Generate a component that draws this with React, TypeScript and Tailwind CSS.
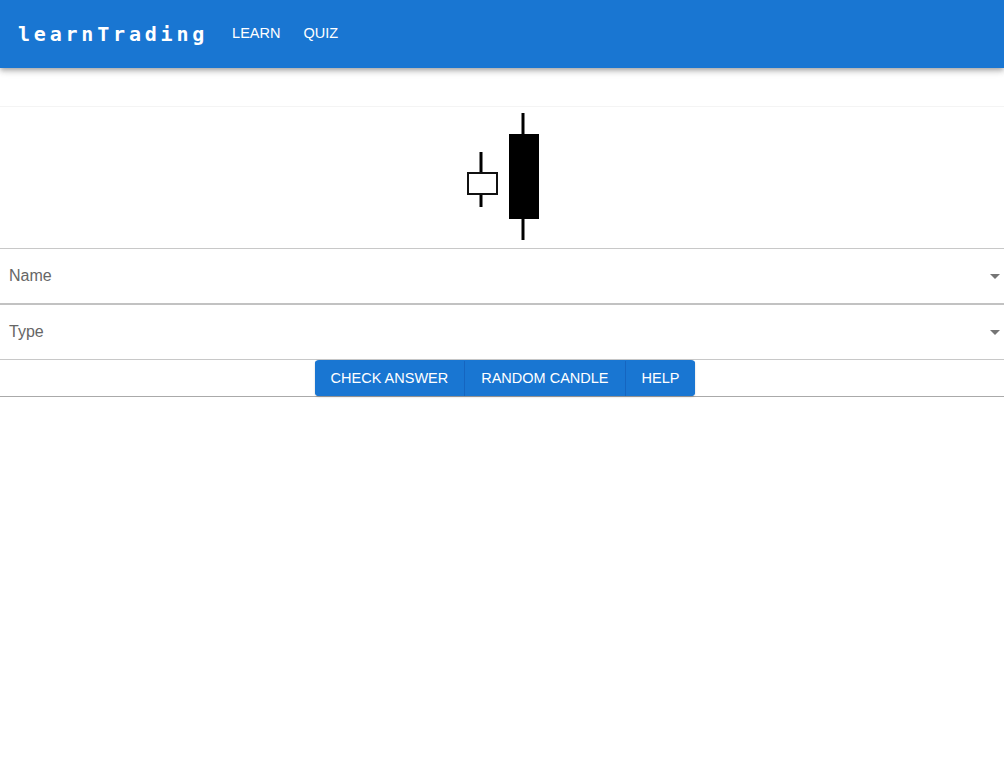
import { useState } from "react";

function CandleChart() {
  return (
    <svg width="78" height="141" viewBox="0 0 78 141">
      {/* small hollow candle */}
      <line x1="18" y1="45" x2="18" y2="100" stroke="#000" strokeWidth="3" />
      <rect x="5" y="66" width="29" height="21" fill="#fff" stroke="#111" strokeWidth="2" />
      {/* big filled candle */}
      <line x1="60" y1="6" x2="60" y2="133" stroke="#000" strokeWidth="3" />
      <rect x="46" y="27" width="30" height="85" fill="#000" />
    </svg>
  );
}

function SelectRow({ label, thick }: { label: string; thick?: boolean }) {
  return (
    <div
      className={
        thick
          ? "flex h-[56px] items-center justify-between border-b-2 border-[#c2c2c2] pl-[9px]"
          : "flex h-[55px] items-center justify-between border-b border-[#c8c8c8] pl-[9px]"
      }
    >
      <span className="text-[16px] text-[#666]">{label}</span>
      <svg width="24" height="24" viewBox="0 0 24 24">
        <path d="M10 10l5 5 5-5z" fill="#757575" />
      </svg>
    </div>
  );
}

export default function App() {
  const [page, setPage] = useState("quiz");

  return (
    <div className="min-h-[771px] bg-white font-['Liberation_Sans',Arial,sans-serif]">
      <header className="relative z-10 flex h-[68px] items-center bg-[#1976d2] shadow-[0_2px_4px_-1px_rgba(0,0,0,0.2),0_4px_5px_0_rgba(0,0,0,0.14),0_1px_10px_0_rgba(0,0,0,0.12)]">
        <h1 className="ml-[18px] mr-[24px] font-['DejaVu_Sans_Mono',monospace] text-[20px] font-bold tracking-[3.8px] text-white">
          learnTrading
        </h1>
        <nav className="flex gap-[23px]">
          <button className="text-[14.5px] text-white" onClick={() => setPage("learn")}>
            LEARN
          </button>
          <button className="text-[14.5px] text-white" onClick={() => setPage("quiz")}>
            QUIZ
          </button>
        </nav>
      </header>

      <div className="h-[39px] border-b border-[#f4f4f4]" />
      <div className="flex h-[141px] justify-center">
        <CandleChart />
      </div>

      <div className="border-t border-[#c8c8c8]">
        <SelectRow label="Name" thick />
        <SelectRow label="Type" />
        <div className="flex justify-center border-b border-[#aaa]">
          <div className="ml-[6px] flex h-[36px] overflow-hidden rounded-[4px] pt-px text-[14.5px] text-white shadow-[0_1px_2px_rgba(0,0,0,0.2)] bg-[#1976d2]">
            <button className="border-r border-[#1565c0] bg-[#1976d2] px-4">CHECK ANSWER</button>
            <button className="border-r border-[#1565c0] bg-[#1976d2] px-4">RANDOM CANDLE</button>
            <button className="bg-[#1976d2] px-4">HELP</button>
          </div>
        </div>
      </div>
      <span className="hidden">{page}</span>
    </div>
  );
}
